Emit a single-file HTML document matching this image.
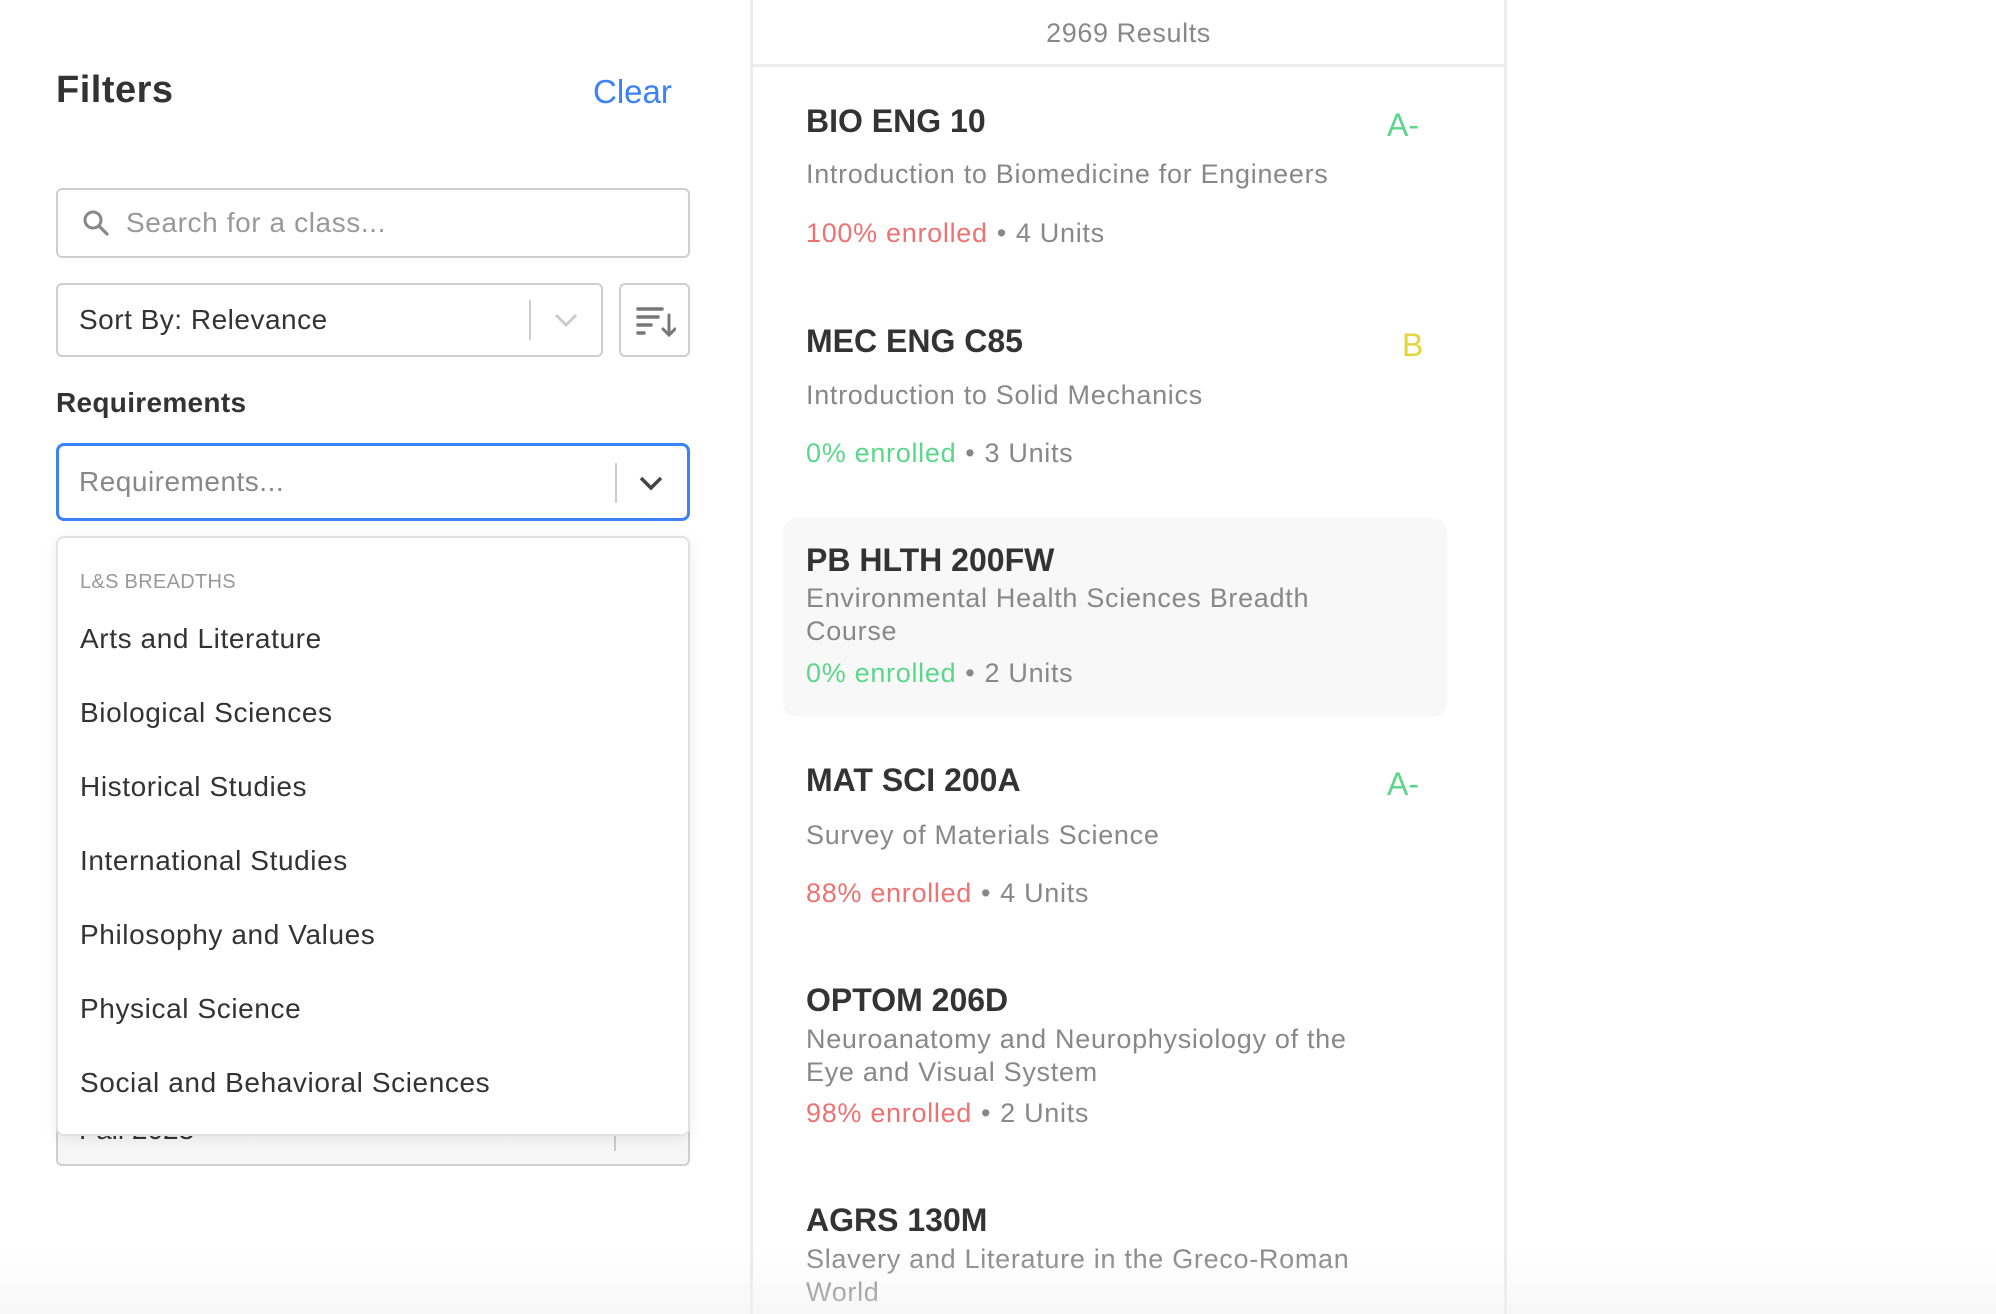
<!DOCTYPE html>
<html><head><meta charset="utf-8">
<style>
*{margin:0;padding:0;box-sizing:border-box}
html,body{width:1996px;height:1314px;overflow:hidden;background:#fff;font-family:"Liberation Sans",Arial,sans-serif}
.a{position:absolute;white-space:nowrap}
.box{position:absolute;border:2px solid #cfcfcf;border-radius:6px;background:#fff}
.t{font-weight:bold;font-size:32px;color:#333;line-height:40px}
.s{font-size:27px;color:#888;line-height:42px;letter-spacing:0.7px}
.m{font-size:27px;color:#888;line-height:40px;letter-spacing:0.7px}
.m b{font-weight:normal;margin:0 9px}
.r{color:#ef7272}.g{color:#5cd68a}
.it{font-size:28px;color:#333;line-height:40px;letter-spacing:0.6px}
</style></head><body>
<div class="a" style="left:56px;top:68px;font-size:38px;font-weight:bold;color:#333;line-height:44px;letter-spacing:0.5px">Filters</div>
<div class="a" style="left:593px;top:71px;font-size:33px;color:#3b82f6;line-height:42px">Clear</div>

<div class="box" style="left:56px;top:188px;width:634px;height:70px"></div>
<svg class="a" style="left:82px;top:209px" width="28" height="28" viewBox="0 0 28 28"><circle cx="11" cy="11" r="8" fill="none" stroke="#888" stroke-width="3"/><path d="M17 17 L25 25" stroke="#888" stroke-width="3.2" stroke-linecap="round"/></svg>
<div class="a" style="left:126px;top:203px;font-size:28px;color:#999;line-height:40px;letter-spacing:0.6px">Search for a class...</div>

<div class="box" style="left:56px;top:283px;width:547px;height:74px"></div>
<div class="a" style="left:79px;top:300px;font-size:28px;color:#333;line-height:40px;letter-spacing:0.5px">Sort By: Relevance</div>
<div class="a" style="left:529px;top:300px;width:2px;height:40px;background:#ccc"></div>
<svg class="a" style="left:553px;top:312px" width="26" height="16" viewBox="0 0 26 16"><path d="M3 3 L13 13 L23 3" fill="none" stroke="#ccc" stroke-width="3"/></svg>
<div class="box" style="left:619px;top:283px;width:71px;height:74px"></div>
<svg class="a" style="left:636px;top:306px" width="40" height="32" viewBox="0 0 40 32"><g stroke="#777" stroke-width="3.5" stroke-linecap="round"><path d="M2 3H26M2 11H22M2 19H15M2 27H8"/><path d="M33 9V29M27 23L33 29L39 23" fill="none" stroke-width="3"/></g></svg>

<div class="a" style="left:56px;top:383px;font-size:28px;font-weight:bold;color:#333;line-height:40px;letter-spacing:0.3px">Requirements</div>

<div class="a" style="left:56px;top:1060px;width:634px;height:106px;border:2px solid #cfcfcf;border-radius:6px;background:linear-gradient(#fff,#f6f6f6)"></div>
<div class="a" style="left:79px;top:1110px;font-size:28px;color:#333;line-height:40px">Fall 2023</div>
<div class="a" style="left:614px;top:1115px;width:2px;height:36px;background:#ccc"></div>

<div class="a" style="left:56px;top:443px;width:634px;height:78px;border:3px solid #3b82f6;border-radius:8px;background:#fff"></div>
<div class="a" style="left:79px;top:461px;font-size:28px;color:#888;line-height:42px;letter-spacing:0.5px">Requirements...</div>
<div class="a" style="left:615px;top:463px;width:2px;height:40px;background:#ccc"></div>
<svg class="a" style="left:638px;top:475px" width="26" height="16" viewBox="0 0 26 16"><path d="M3 3 L13 13 L23 3" fill="none" stroke="#444" stroke-width="3.5"/></svg>

<div class="a" style="left:56px;top:536px;width:634px;height:600px;border:2px solid #e2e2e2;border-radius:8px;background:#fff;box-shadow:0 4px 14px rgba(0,0,0,.08)">
<div class="a" style="left:22px;top:31px;font-size:20px;color:#999;line-height:26px;letter-spacing:0.3px">L&amp;S BREADTHS</div>
<div class="a it" style="left:22px;top:81px">Arts and Literature</div>
<div class="a it" style="left:22px;top:155px">Biological Sciences</div>
<div class="a it" style="left:22px;top:229px">Historical Studies</div>
<div class="a it" style="left:22px;top:303px">International Studies</div>
<div class="a it" style="left:22px;top:377px">Philosophy and Values</div>
<div class="a it" style="left:22px;top:451px">Physical Science</div>
<div class="a it" style="left:22px;top:525px">Social and Behavioral Sciences</div>
</div>

<div class="a" style="left:750px;top:0;width:3px;height:1314px;background:#ececec"></div>
<div class="a" style="left:1504px;top:0;width:3px;height:1314px;background:#ececec"></div>
<div class="a" style="left:753px;top:64px;width:751px;height:3px;background:#ececec"></div>
<div class="a" style="left:753px;top:13px;width:751px;text-align:center;font-size:27px;color:#888;line-height:40px;letter-spacing:0.6px">2969 Results</div>

<div class="a" style="left:783px;top:518px;width:664px;height:199px;background:#f8f8f8;border-radius:14px"></div>

<div class="a t" style="left:806px;top:101px">BIO ENG 10</div>
<div class="a" style="left:1387px;top:105px;font-size:32px;color:#5cd68a;line-height:40px">A-</div>
<div class="a s" style="left:806px;top:153px">Introduction to Biomedicine for Engineers</div>
<div class="a m" style="left:806px;top:213px"><span class="r">100% enrolled</span><b>•</b>4 Units</div>

<div class="a t" style="left:806px;top:321px">MEC ENG C85</div>
<div class="a" style="left:1402px;top:325px;font-size:32px;color:#e3d43a;line-height:40px">B</div>
<div class="a s" style="left:806px;top:374px">Introduction to Solid Mechanics</div>
<div class="a m" style="left:806px;top:433px"><span class="g">0% enrolled</span><b>•</b>3 Units</div>

<div class="a t" style="left:806px;top:540px">PB HLTH 200FW</div>
<div class="a s" style="left:806px;top:582px;line-height:33px">Environmental Health Sciences Breadth<br>Course</div>
<div class="a m" style="left:806px;top:653px"><span class="g">0% enrolled</span><b>•</b>2 Units</div>

<div class="a t" style="left:806px;top:760px">MAT SCI 200A</div>
<div class="a" style="left:1387px;top:764px;font-size:32px;color:#5cd68a;line-height:40px">A-</div>
<div class="a s" style="left:806px;top:814px">Survey of Materials Science</div>
<div class="a m" style="left:806px;top:873px"><span class="r">88% enrolled</span><b>•</b>4 Units</div>

<div class="a t" style="left:806px;top:980px">OPTOM 206D</div>
<div class="a s" style="left:806px;top:1023px;line-height:33px">Neuroanatomy and Neurophysiology of the<br>Eye and Visual System</div>
<div class="a m" style="left:806px;top:1093px"><span class="r">98% enrolled</span><b>•</b>2 Units</div>

<div class="a t" style="left:806px;top:1200px">AGRS 130M</div>
<div class="a s" style="left:806px;top:1243px;line-height:33px">Slavery and Literature in the Greco-Roman<br>World</div>

<div class="a" style="left:0;top:1250px;width:1996px;height:64px;background:linear-gradient(rgba(240,240,240,0),rgba(240,240,240,.5))"></div>
</body></html>
